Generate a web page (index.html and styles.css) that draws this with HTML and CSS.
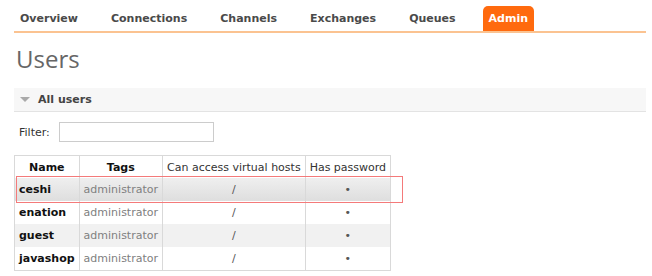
FILE: index.html
```html
<!DOCTYPE html>
<html lang="en">
<head>
    <meta charset="UTF-8">
    <meta name="viewport" content="width=device-width, initial-scale=1.0">
    <title>RabbitMQ Management - Users</title>
    <link rel="stylesheet" href="styles.css">
</head>
<body>
    <div class="page">
        <ul class="tabs">
            <li><a href="#">Overview</a></li>
            <li><a href="#">Connections</a></li>
            <li><a href="#">Channels</a></li>
            <li><a href="#">Exchanges</a></li>
            <li><a href="#">Queues</a></li>
            <li class="selected"><a href="#">Admin</a></li>
        </ul>

        <h1>Users</h1>

        <div class="section">
            <h2 class="section-title"><span class="arrow"></span>All users</h2>
            <div class="filter">
                <label for="filter">Filter:</label>
                <input type="text" id="filter">
            </div>

            <div class="table-wrap">
                <table class="list">
                    <thead>
                        <tr>
                            <th class="strong">Name</th>
                            <th class="strong">Tags</th>
                            <th>Can access virtual hosts</th>
                            <th>Has password</th>
                        </tr>
                    </thead>
                    <tbody>
                        <tr class="hover">
                            <td class="name">ceshi</td>
                            <td class="tags">administrator</td>
                            <td class="c">/</td>
                            <td class="c">&bull;</td>
                        </tr>
                        <tr>
                            <td class="name">enation</td>
                            <td class="tags">administrator</td>
                            <td class="c">/</td>
                            <td class="c">&bull;</td>
                        </tr>
                        <tr class="alt">
                            <td class="name">guest</td>
                            <td class="tags">administrator</td>
                            <td class="c">/</td>
                            <td class="c">&bull;</td>
                        </tr>
                        <tr>
                            <td class="name">javashop</td>
                            <td class="tags">administrator</td>
                            <td class="c">/</td>
                            <td class="c">&bull;</td>
                        </tr>
                    </tbody>
                </table>
                <!-- annotation box around the first row -->
                <div class="mark"></div>
            </div>
        </div>
    </div>
</body>
</html>
```

FILE: styles.css
```css
body {
    margin: 0;
    background: #fff;
    color: #444;
    font-family: "DejaVu Sans", Verdana, sans-serif;
    font-size: 11px;
}
.page {
    padding: 6px 6px 0 14px;
}

/* Top tabs */
.tabs {
    display: flex;
    list-style: none;
    margin: 0;
    padding: 0;
    border-bottom: 2px solid #fbc391;
}
.tabs li {
    margin-right: 21px;
}
.tabs a {
    display: block;
    height: 25px;
    line-height: 26px;
    padding: 0 6px;
    color: #4a4a4a;
    font-weight: bold;
    text-decoration: none;
    border-radius: 5px 5px 0 0;
}
.tabs .selected a {
    background-color: #ff6a0e;
    color: #fff;
}

h1 {
    margin: 12px 0 0 2px;
    font-family: "Open Sans", sans-serif;
    font-size: 24px;
    font-weight: normal;
    line-height: 28px;
    color: #666;
}

/* Section */
.section {
    margin-top: 15px;
}
.section-title {
    display: flex;
    align-items: center;
    margin: 0;
    height: 23px;
    padding-left: 6px;
    background-color: #f7f7f7;
    border-bottom: 1px solid #e3e3e3;
    font-size: 11px;
    font-weight: bold;
    color: #444;
}
.arrow {
    width: 0;
    height: 0;
    margin-right: 8px;
    border-left: 5px solid transparent;
    border-right: 5px solid transparent;
    border-top: 5px solid #aaa;
}

.filter {
    display: flex;
    align-items: center;
    margin-top: 10px;
    padding-left: 5px;
}
.filter label {
    margin-right: 9px;
    color: #333;
}
.filter input {
    box-sizing: border-box;
    width: 155px;
    height: 20px;
    margin: 0;
    border: 1px solid #ccc;
    padding: 0 3px;
}

/* Users table */
.table-wrap {
    position: relative;
    display: inline-block;
    margin-top: 13px;
}
.list {
    border-collapse: collapse;
    border: 1px solid #d9d9d9;
}
.list th,
.list td {
    height: 23px;
    padding: 0 4px;
    border: 1px solid #d9d9d9;
    border-top: none;
    border-bottom: none;
    white-space: nowrap;
}
.list th {
    height: 22px;
    font-weight: normal;
    color: #333;
    text-align: center;
}
.list th.strong {
    font-weight: bold;
    color: #111;
}
.list td.name {
    font-weight: bold;
    color: #111;
}
.list td.tags {
    color: #808080;
}
.list td.c {
    text-align: center;
    color: #555;
}
.list tr.hover {
    background: linear-gradient(#efefef, #dedede);
}
.list tr.alt {
    background-color: #f1f1f1;
}

.mark {
    position: absolute;
    left: 2px;
    top: 21px;
    width: 385px;
    height: 25px;
    border: 1px solid #f47a7a;
}
```
